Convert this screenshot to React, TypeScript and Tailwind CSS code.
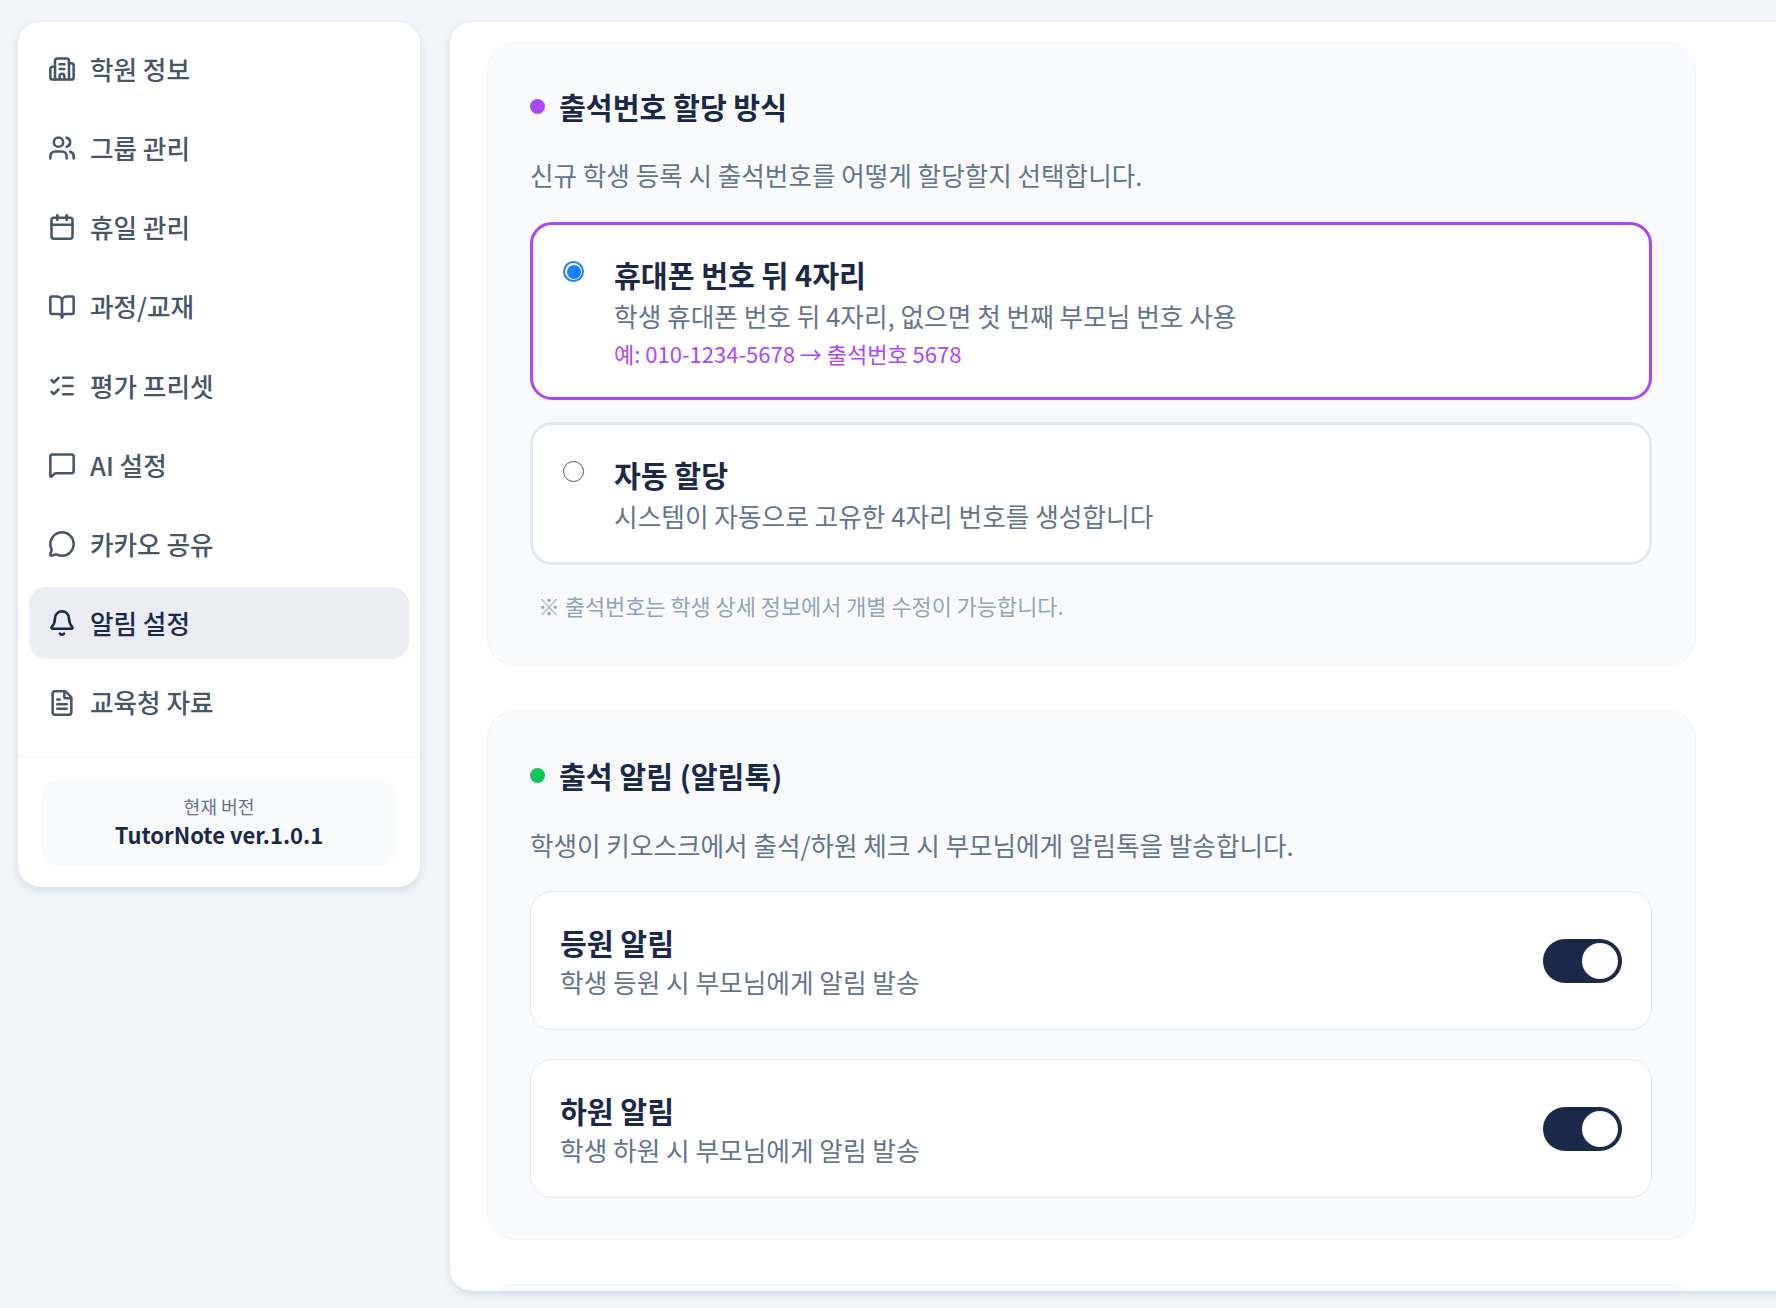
import {
  Bell,
  BookOpen,
  Building2,
  Calendar,
  FileText,
  ListChecks,
  MessageCircle,
  MessageSquare,
  Users,
  type LucideIcon,
} from "lucide-react";

const menu: { label: string; icon: LucideIcon; active?: boolean }[] = [
  { label: "학원 정보", icon: Building2 },
  { label: "그룹 관리", icon: Users },
  { label: "휴일 관리", icon: Calendar },
  { label: "과정/교재", icon: BookOpen },
  { label: "평가 프리셋", icon: ListChecks },
  { label: "AI 설정", icon: MessageSquare },
  { label: "카카오 공유", icon: MessageCircle },
  { label: "알림 설정", icon: Bell, active: true },
  { label: "교육청 자료", icon: FileText },
];

function Sidebar() {
  return (
    <aside className="w-[402px] shrink-0 self-start overflow-hidden rounded-[22px] bg-white shadow-[0_3px_8px_rgba(100,116,139,0.2)]">
      <nav className="flex flex-col gap-[7.2px] px-[11px] pt-[11px]">
        {menu.map((item) => (
          <div
            key={item.label}
            className={`flex h-[72px] items-center gap-[14.5px] rounded-[17px] pl-[18.5px] text-[25.6px] font-medium ${
              item.active ? "bg-[#ebedf2] text-[#1b2949]" : "text-[#475569]"
            }`}
          >
            <item.icon size={28} strokeWidth={2.2} className={item.active ? "text-[#1b2949]" : "text-[#475569]"} />
            <span>{item.label}</span>
          </div>
        ))}
      </nav>
      <div className="mt-[17px] border-t border-[#f1f5f9] px-[23px] pb-[22px] pt-[23px]">
        <div className="flex h-[85px] flex-col items-center justify-center rounded-[17px] bg-[#f8fafc]">
          <span className="text-[18.2px] leading-[26px] text-[#64748b]">현재 버전</span>
          <span className="mb-[3px] text-[22px] font-semibold leading-[30px] text-[#1b2949]">TutorNote ver.1.0.1</span>
        </div>
      </div>
    </aside>
  );
}

function SectionTitle({ dot, children }: { dot: string; children: string }) {
  return (
    <div className="flex items-center gap-[14px]">
      <span className={`h-[15px] w-[15px] rounded-full ${dot}`} />
      <h2 className="text-[29.2px] font-bold leading-[40px] text-[#1b2949]">{children}</h2>
    </div>
  );
}

function RadioOption({
  selected,
  title,
  desc,
  example,
}: {
  selected?: boolean;
  title: string;
  desc: string;
  example?: string;
}) {
  return (
    <div
      className={`flex gap-[30px] rounded-[22px] border-[3px] bg-white pl-[30px] ${
        selected ? "h-[178px] border-[#ab47fb]" : "h-[143px] border-[#e2e8f0]"
      } pt-[22px]`}
    >
      {selected ? (
        <span className="mt-[14px] flex h-[21px] w-[21px] items-center justify-center rounded-full border-2 border-[#1a7fff] bg-white">
          <span className="h-[14px] w-[14px] rounded-full bg-[#1a7fff]" />
        </span>
      ) : (
        <span className="mt-[14px] h-[21px] w-[21px] rounded-full border-[1.5px] border-[#475569] bg-white" />
      )}
      <div className="flex flex-col pt-[5px]">
        <span className="text-[29.2px] font-bold leading-[44px] text-[#1b2949]">{title}</span>
        <span className="mt-[2px] text-[25.7px] leading-[36px] text-[#64748b]">{desc}</span>
        {example && <span className="mt-[3px] text-[22px] leading-[32px] text-[#ab47fb]">{example}</span>}
      </div>
    </div>
  );
}

function ToggleRow({ title, desc }: { title: string; desc: string }) {
  return (
    <div className="flex h-[139px] items-center justify-between rounded-[22px] border border-[#e2e8f0] bg-white pl-[29px] pr-[29px]">
      <div className="flex flex-col">
        <span className="text-[29.2px] font-bold leading-[42px] text-[#1b2949]">{title}</span>
        <span className="mt-[1px] text-[25.7px] leading-[36px] text-[#64748b]">{desc}</span>
      </div>
      <span className="flex h-[44px] w-[79px] items-center justify-end rounded-full bg-[#1b2949] pr-[4px]">
        <span className="h-[36px] w-[36px] rounded-full bg-white" />
      </span>
    </div>
  );
}

export default function App() {
  return (
    <div
      className="flex h-[1308px] w-[1776px] gap-[30px] overflow-hidden bg-[#f1f4f9] pl-[18px] pt-[22px]"
      style={{ fontFamily: '"Noto Sans CJK KR", "Noto Sans", sans-serif' }}
    >
      <Sidebar />
      <main className="h-[1269px] w-[1400px] shrink-0 overflow-hidden rounded-[22px] bg-white pl-[37px] pt-[20px] shadow-[0_3px_8px_rgba(100,116,139,0.2)]">
        <div className="flex w-[1209px] flex-col gap-[44px]">
          <section className="h-[624px] rounded-[28px] border border-[#f1f5f9] bg-[#f8fafc] pl-[42px] pr-[43px] pt-[43px]">
            <SectionTitle dot="bg-[#ab47fb]">출석번호 할당 방식</SectionTitle>
            <p className="mt-[31px] text-[25.6px] leading-[36px] text-[#64748b]">
              신규 학생 등록 시 출석번호를 어떻게 할당할지 선택합니다.
            </p>
            <div className="mt-[29px] flex flex-col gap-[22px]">
              <RadioOption
                selected
                title="휴대폰 번호 뒤 4자리"
                desc="학생 휴대폰 번호 뒤 4자리, 없으면 첫 번째 부모님 번호 사용"
                example="예: 010-1234-5678 → 출석번호 5678"
              />
              <RadioOption title="자동 할당" desc="시스템이 자동으로 고유한 4자리 번호를 생성합니다" />
            </div>
            <p className="mt-[25px] pl-[8px] text-[21.9px] leading-[32px] text-[#94a3b8]">
              ※ 출석번호는 학생 상세 정보에서 개별 수정이 가능합니다.
            </p>
          </section>
          <section className="h-[530px] rounded-[28px] border border-[#f1f5f9] bg-[#f8fafc] pl-[42px] pr-[43px] pt-[44px]">
            <SectionTitle dot="bg-[#0bc856]">출석 알림 (알림톡)</SectionTitle>
            <p className="mt-[32px] text-[25.6px] leading-[36px] text-[#64748b]">
              학생이 키오스크에서 출석/하원 체크 시 부모님에게 알림톡을 발송합니다.
            </p>
            <div className="mt-[28px] flex flex-col gap-[29px]">
              <ToggleRow title="등원 알림" desc="학생 등원 시 부모님에게 알림 발송" />
              <ToggleRow title="하원 알림" desc="학생 하원 시 부모님에게 알림 발송" />
            </div>
          </section>
          <section className="h-[300px] rounded-[28px] border border-[#f1f5f9] bg-[#f8fafc]" />
        </div>
      </main>
    </div>
  );
}
